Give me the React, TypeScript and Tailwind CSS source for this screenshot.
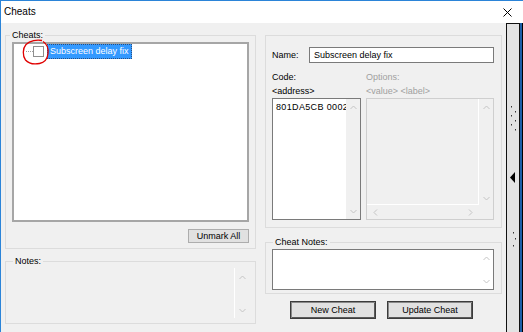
import { JSX } from "react";

type Dir = "up" | "down" | "left" | "right";

function Arrow({ dir }: { dir: Dir }): JSX.Element {
  const paths: Record<Dir, string> = {
    up: "M0.5 4 L3.5 1 L6.5 4",
    down: "M0.5 1 L3.5 4 L6.5 1",
    left: "M4 0.5 L1 3.5 L4 6.5",
    right: "M1 0.5 L4 3.5 L1 6.5",
  };
  const vertical = dir === "up" || dir === "down";
  return (
    <svg
      width={vertical ? 7 : 5}
      height={vertical ? 5 : 7}
      viewBox={vertical ? "0 0 7 5" : "0 0 5 7"}
      className="text-[#c4c4c4] shrink-0"
      aria-hidden="true"
    >
      <path d={paths[dir]} fill="none" stroke="currentColor" strokeWidth="1" />
    </svg>
  );
}

function Splitter(): JSX.Element {
  // grip dots + collapse arrow
  const dots = [
    [511, 106],
    [515, 111],
    [511, 115],
    [515, 120],
    [511, 124],
    [515, 129],
    [513, 232],
    [515, 238],
    [513, 245],
  ];
  return (
    <div className="w-[14px] border-l border-r border-t border-[#111] bg-[#e3e3e3]">
      <svg width="12" height="308" viewBox="507 24 12 308" aria-hidden="true">
        {dots.map(([x, y]) => (
          <rect key={`${x}-${y}`} x={x} y={y} width="1" height="1.5" fill="#333" />
        ))}
        <polygon points="510,177.5 515,172 515,183" fill="#000" />
      </svg>
    </div>
  );
}

export default function App(): JSX.Element {
  return (
    <div className="w-[523px] h-[332px] overflow-hidden flex flex-col bg-white border-l border-t border-[#2b84d8] font-['Liberation_Sans',Arial,sans-serif] text-[9px] leading-none text-black">
      <header className="h-[22px] shrink-0 flex items-center justify-between pl-[3px] pr-[11px]">
        <span className="text-[10px]">Cheats</span>
        <svg width="9" height="9" viewBox="0 0 9 9" aria-label="Close">
          <path d="M0.5 0.5 L8.5 8.5 M8.5 0.5 L0.5 8.5" stroke="#000" strokeWidth="1" />
        </svg>
      </header>

      <div className="flex flex-1 min-h-0">
        <main className="w-[505px] bg-[#f0f0f0] flex gap-[9px] pl-[4px] pt-[6px]">
          {/* left column */}
          <div className="w-[251px] flex flex-col">
            <fieldset className="border border-[#dcdcdc] px-[6px] pb-[5px]">
              <legend className="-ml-[2px] px-[2px] leading-[13px]">Cheats:</legend>
              <div className="relative h-[180px] border-2 border-[#a6a6a6] bg-white">
                <div className="flex items-center h-[15px] pl-[12px]">
                  <span className="w-[7px] border-t border-dotted border-[#a0a0a0]" />
                  <span className="w-[11px] h-[11px] border border-[#8f8f8f] bg-white" />
                  <span className="ml-[3px] h-[15px] flex items-center pl-[2px] pr-[2px] bg-[#3399ff] text-white border border-dotted border-[#2a4f80]">
                    Subscreen delay fix
                  </span>
                </div>
                <svg
                  className="absolute left-[6px] -top-[7px]"
                  width="31"
                  height="30"
                  viewBox="20 37 31 30"
                  aria-hidden="true"
                >
                  <path
                    d="M42 40.5 C37 39.5 30 40.5 26 44.5 C22.5 48.5 22.5 56 25.5 60 C28.5 63.5 34 64.5 39.5 63.5 C44.5 62.5 47.5 58.5 48 53.5 C48.5 48.5 47 44 43 41.5"
                    fill="none"
                    stroke="#e00000"
                    strokeWidth="1.3"
                  />
                </svg>
              </div>
              <div className="flex justify-end mt-[7px]">
                <button className="w-[61px] h-[14px] border border-[#adadad] bg-[#e1e1e1] leading-none">
                  Unmark All
                </button>
              </div>
            </fieldset>

            <fieldset className="mt-[6px] border border-[#dcdcdc] px-[6px] pb-[5px]">
              <legend className="ml-[1px] px-[2px] leading-[13px]">Notes:</legend>
              <div className="flex justify-end h-[50px]">
                <div className="w-[15px] border-l border-white flex flex-col items-center justify-between pt-[7px] pb-[5px]">
                  <Arrow dir="up" />
                  <Arrow dir="down" />
                </div>
              </div>
            </fieldset>
          </div>

          {/* right column */}
          <div className="w-[237px] flex flex-col">
            <div className="mt-[6px] h-[193px] border border-[#dcdcdc] pl-[6px] pr-[7px] pt-[11px]">
              <div className="flex items-center h-[16px]">
                <span className="w-[37px]">Name:</span>
                <div className="flex-1 h-full border border-[#7a7a7a] bg-white pl-[4px] flex items-center">
                  Subscreen delay fix
                </div>
              </div>

              <div className="mt-[7px] flex gap-[5px]">
                <div className="w-[89px] flex flex-col">
                  <span className="leading-[14px]">Code:</span>
                  <span className="leading-[14px]">&lt;address&gt;</span>
                  <div className="h-[122px] border border-[#7a7a7a] bg-white flex">
                    <div className="flex-1 overflow-hidden whitespace-nowrap pl-[3px] pt-[3px] leading-[11px] tracking-[0.35px]">
                      801DA5CB 0002
                    </div>
                    <div className="w-[14px] bg-[#f0f0f0] flex flex-col items-center justify-between pt-[6px] pb-[5px]">
                      <Arrow dir="up" />
                      <Arrow dir="down" />
                    </div>
                  </div>
                </div>

                <div className="w-[128px] flex flex-col text-[#a0a0a0]">
                  <span className="leading-[14px]">Options:</span>
                  <span className="leading-[14px]">&lt;value&gt; &lt;label&gt;</span>
                  <div className="h-[122px] border border-[#cfcfcf] bg-[#f0f0f0] grid grid-cols-[1fr_14px] grid-rows-[1fr_14px]">
                    <div className="border-r border-b border-white" />
                    <div className="flex flex-col items-center justify-between pt-[6px] pb-[4px]">
                      <Arrow dir="up" />
                      <Arrow dir="down" />
                    </div>
                    <div className="flex items-center justify-between pl-[6px] pr-[6px]">
                      <Arrow dir="left" />
                      <Arrow dir="right" />
                    </div>
                    <div />
                  </div>
                </div>
              </div>
            </div>

            <fieldset className="mt-[8px] border border-[#dcdcdc] pl-[6px] pr-[7px] pb-[3px]">
              <legend className="ml-[1px] px-[2px] leading-[13px]">Cheat Notes:</legend>
              <div className="h-[41px] border border-[#7a7a7a] bg-white flex justify-end">
                <div className="w-[14px] flex flex-col items-center justify-between pt-[6px] pb-[5px]">
                  <Arrow dir="up" />
                  <Arrow dir="down" />
                </div>
              </div>
            </fieldset>

            <div className="mt-[7px] flex gap-[11px] pl-[25px]">
              <button className="w-[86px] h-[18px] border border-[#3c3c3c] bg-[#e1e1e1] shadow-[inset_1px_1px_0_#8a8a8a,inset_-1px_-1px_0_#5a5a5a] leading-none">
                New Cheat
              </button>
              <button className="w-[86px] h-[18px] border border-[#3c3c3c] bg-[#e1e1e1] shadow-[inset_1px_1px_0_#8a8a8a,inset_-1px_-1px_0_#5a5a5a] leading-none">
                Update Cheat
              </button>
            </div>
          </div>
        </main>

        <Splitter />
        <div className="w-[3px] bg-[#1b5fa8] border-r border-black" />
      </div>
    </div>
  );
}
